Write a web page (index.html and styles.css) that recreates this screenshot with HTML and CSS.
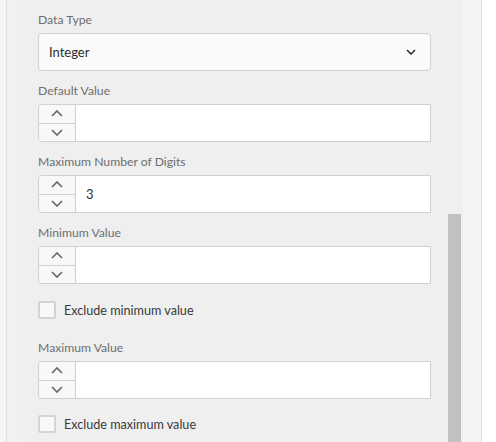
FILE: index.html
```html
<!DOCTYPE html>
<html>
<head>
<meta charset="utf-8">
<link rel="stylesheet" href="styles.css">
</head>
<body>
<div class="frame">
  <div class="edge-left"></div>
  <div class="gutter-left"></div>
  <div class="panel">
    <div class="fields">
      <div class="group">
        <div class="label">Data Type</div>
        <div class="select">
          <span class="select-value">Integer</span>
          <svg class="select-chev" width="10" height="6" viewBox="0 0 10 6"><path d="M1 1 L5 5 L9 1" fill="none" stroke="#2c2c2c" stroke-width="1.5"/></svg>
        </div>
      </div>
      <div class="group">
        <div class="label">Default Value</div>
        <div class="number">
          <div class="stepper">
            <div class="step"><svg width="12" height="7" viewBox="0 0 12 7"><path d="M1 6 L6 1 L11 6" fill="none" stroke="#6a6a6a" stroke-width="1.7"/></svg></div>
            <div class="step step-down"><svg width="12" height="7" viewBox="0 0 12 7"><path d="M1 1 L6 6 L11 1" fill="none" stroke="#6a6a6a" stroke-width="1.7"/></svg></div>
          </div>
          <div class="number-value"></div>
        </div>
      </div>
      <div class="group">
        <div class="label">Maximum Number of Digits</div>
        <div class="number">
          <div class="stepper">
            <div class="step"><svg width="12" height="7" viewBox="0 0 12 7"><path d="M1 6 L6 1 L11 6" fill="none" stroke="#6a6a6a" stroke-width="1.7"/></svg></div>
            <div class="step step-down"><svg width="12" height="7" viewBox="0 0 12 7"><path d="M1 1 L6 6 L11 1" fill="none" stroke="#6a6a6a" stroke-width="1.7"/></svg></div>
          </div>
          <div class="number-value">3</div>
        </div>
      </div>
      <div class="group">
        <div class="label">Minimum Value</div>
        <div class="number">
          <div class="stepper">
            <div class="step"><svg width="12" height="7" viewBox="0 0 12 7"><path d="M1 6 L6 1 L11 6" fill="none" stroke="#6a6a6a" stroke-width="1.7"/></svg></div>
            <div class="step step-down"><svg width="12" height="7" viewBox="0 0 12 7"><path d="M1 1 L6 6 L11 1" fill="none" stroke="#6a6a6a" stroke-width="1.7"/></svg></div>
          </div>
          <div class="number-value"></div>
        </div>
      </div>
      <label class="check">
        <span class="box"></span>
        <span class="check-text">Exclude minimum value</span>
      </label>
      <div class="group group-after-check">
        <div class="label">Maximum Value</div>
        <div class="number">
          <div class="stepper">
            <div class="step"><svg width="12" height="7" viewBox="0 0 12 7"><path d="M1 6 L6 1 L11 6" fill="none" stroke="#6a6a6a" stroke-width="1.7"/></svg></div>
            <div class="step step-down"><svg width="12" height="7" viewBox="0 0 12 7"><path d="M1 1 L6 6 L11 1" fill="none" stroke="#6a6a6a" stroke-width="1.7"/></svg></div>
          </div>
          <div class="number-value"></div>
        </div>
      </div>
      <label class="check check-last">
        <span class="box"></span>
        <span class="check-text">Exclude maximum value</span>
      </label>
    </div>
    <div class="scrolltrack">
      <div class="thumb"></div>
    </div>
  </div>
  <div class="gutter-right"></div>
  <div class="edge-right"></div>
</div>
</body>
</html>
```
FILE: styles.css
```css
html, body {
  margin: 0;
  padding: 0;
  background: #ffffff;
}
body {
  font-family: Lato, "Open Sans", sans-serif;
  width: 496px;
  height: 442px;
  overflow: hidden;
}
.frame {
  display: flex;
  height: 442px;
}
.edge-left {
  width: 6px;
  background: #f5f5f5;
  border-right: 1px solid #e2e2e2;
}
.gutter-left {
  width: 16px;
  background: #f1f1f1;
}
.panel {
  width: 440px;
  background: #efefef;
  display: flex;
  overflow: hidden;
}
.fields {
  width: 393px;
  padding: 11px 0 0 15px;
  display: flex;
  flex-direction: column;
}
.group {
  display: flex;
  flex-direction: column;
  margin-bottom: 11px;
}
.group-after-check {
  margin-top: 20px;
}
.label {
  height: 18px;
  line-height: 18px;
  font-size: 12.2px;
  color: #6e6e6e;
  margin-bottom: 4px;
}
.select {
  height: 36px;
  border: 1px solid #d0d0d0;
  border-radius: 4px;
  background: #fafafa;
  display: flex;
  align-items: center;
  justify-content: space-between;
  padding: 0 14px 0 10px;
}
.select-value {
  font-size: 13px;
  color: #2c2c2c;
}
.select-chev {
  display: block;
}
.number {
  height: 36px;
  border: 1px solid #d0d0d0;
  border-radius: 4px 0 0 4px;
  background: #ffffff;
  display: flex;
}
.stepper {
  width: 36px;
  border-right: 1px solid #d0d0d0;
  background: #f8f8f8;
  border-radius: 4px 0 0 4px;
  display: flex;
  flex-direction: column;
}
.step {
  flex: 1;
  display: flex;
  align-items: center;
  justify-content: center;
}
.step svg {
  display: block;
}
.step-down {
  border-top: 1px solid #d0d0d0;
}
.number-value {
  flex: 1;
  padding-left: 10px;
  line-height: 36px;
  font-size: 13px;
  color: #2c2c2c;
}
.check {
  display: flex;
  align-items: center;
  height: 18px;
  margin-top: 6px;
}
.check-last {
  margin-top: 5px;
}
.box {
  width: 14px;
  height: 14px;
  border: 2px solid #d3d3d3;
  border-radius: 2px;
  background: #f8f8f8;
}
.check-text {
  margin-left: 8px;
  font-size: 12.6px;
  color: #3a3a3a;
}
.scrolltrack {
  margin-left: 17px;
  width: 13px;
  display: flex;
  flex-direction: column;
}
.thumb {
  margin-top: 214px;
  flex: 1;
  background: #c1c1c1;
}
.gutter-right {
  width: 18px;
  background: #f4f4f4;
  border-right: 1px solid #e0e0e0;
}
.edge-right {
  flex: 1;
  background: #ffffff;
}
```
